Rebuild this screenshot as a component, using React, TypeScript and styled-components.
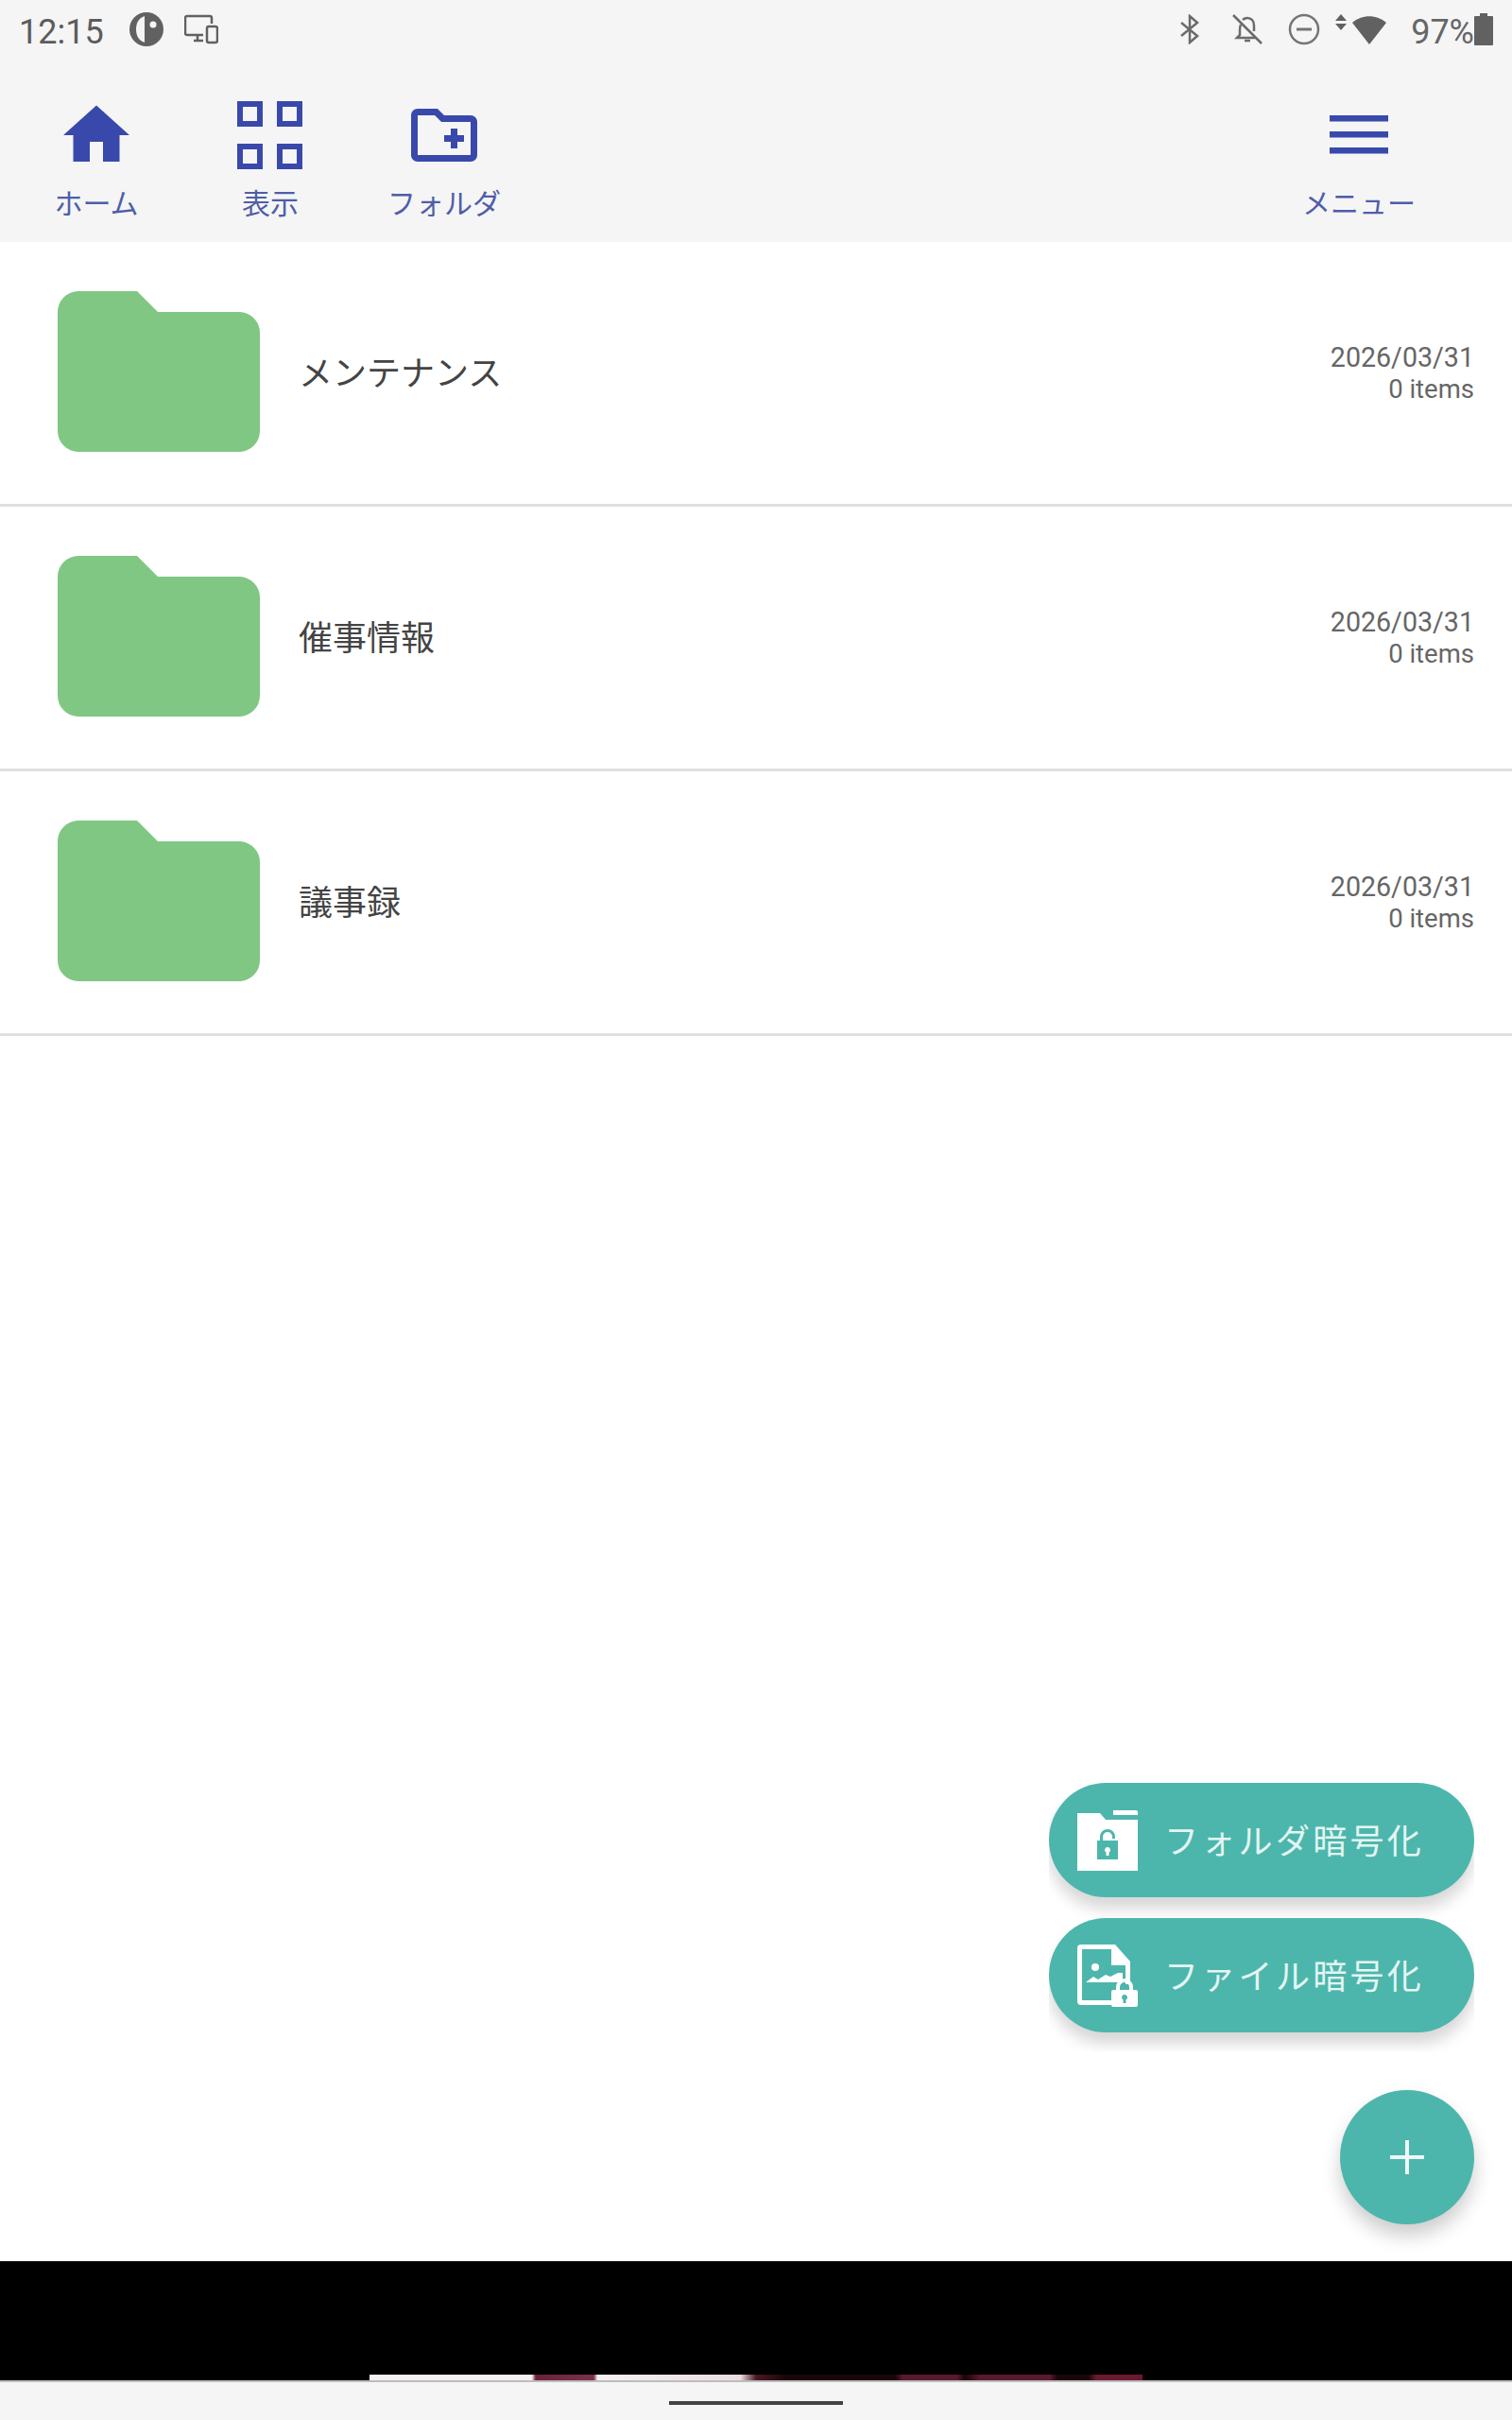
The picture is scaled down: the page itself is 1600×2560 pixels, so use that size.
import React from "react";
import styled, { createGlobalStyle } from "styled-components";

const FONT = `Roboto, "Noto Sans CJK JP", sans-serif`;
const INDIGO = "#3949ab";
const TEAL = "#4db6ac";

const folders = [
  { name: "メンテナンス", date: "2026/03/31", count: "0 items" },
  { name: "催事情報", date: "2026/03/31", count: "0 items" },
  { name: "議事録", date: "2026/03/31", count: "0 items" },
];

export default function App() {
  return (
    <Page>
      <GlobalStyle />
      <StatusBar>
        <StatusGroup>
          <Clock>12:15</Clock>
          <DataSaverIcon />
          <DevicesIcon />
        </StatusGroup>
        <StatusGroup>
          <BluetoothIcon />
          <BellOffIcon />
          <DndIcon />
          <WifiIcon />
          <Battery>97%</Battery>
          <BatteryIcon />
        </StatusGroup>
      </StatusBar>
      <Toolbar>
        <ToolGroup>
          <ToolItem>
            <HomeIcon />
            <ToolLabel>ホーム</ToolLabel>
          </ToolItem>
          <ToolItem>
            <GridIcon />
            <ToolLabel>表示</ToolLabel>
          </ToolItem>
          <ToolItem>
            <NewFolderIcon />
            <ToolLabel>フォルダ</ToolLabel>
          </ToolItem>
        </ToolGroup>
        <ToolItem>
          <MenuIcon />
          <ToolLabel>メニュー</ToolLabel>
        </ToolItem>
      </Toolbar>
      <Content>
        {folders.map((folder) => (
          <Row key={folder.name}>
            <FolderShape />
            <RowName>{folder.name}</RowName>
            <RowMeta>
              <MetaDate>{folder.date}</MetaDate>
              <MetaCount>{folder.count}</MetaCount>
            </RowMeta>
          </Row>
        ))}
        <FabArea>
          <PillStack>
            <Pill>
              <FolderLockIcon />
              <PillText>フォルダ暗号化</PillText>
            </Pill>
            <Pill>
              <FileLockIcon />
              <PillText>ファイル暗号化</PillText>
            </Pill>
          </PillStack>
          <RoundFab>
            <svg width="36" height="36" viewBox="0 0 36 36">
              <path d="M16 0h4v16h16v4H20v16h-4V20H0v-4h16z" fill="#eef8f7" />
            </svg>
          </RoundFab>
        </FabArea>
      </Content>
      <BlackBand>
        <Sliver />
      </BlackBand>
      <NavBar>
        <NavHandle />
      </NavBar>
    </Page>
  );
}

const HomeIcon = () => (
  <ToolSvg width="84" height="84" viewBox="0 0 24 24">
    <path d="M10 20v-6h4v6h5v-8h3L12 3 2 12h3v8z" fill={INDIGO} />
  </ToolSvg>
);

const GridIcon = () => (
  <ToolSvg width="72" height="72" viewBox="0 0 72 72">
    <path
      fillRule="evenodd"
      d="M1 0h27v27H1zM7 6v15h15V6zM43 0h27v27H43zM49 6v15h15V6zM1 45h27v27H1zM7 51v15h15V51zM43 45h27v27H43zM49 51v15h15V51z"
      fill={INDIGO}
    />
  </ToolSvg>
);

const NewFolderIcon = () => (
  <ToolSvg width="84" height="84" viewBox="0 0 24 24">
    <path
      d="M20 6h-8l-2-2H4c-1.11 0-1.99.89-1.99 2L2 18c0 1.11.89 2 2 2h16c1.11 0 2-.89 2-2V8c0-1.11-.89-2-2-2zm0 12H4V6h5.17l2 2H20v10zm-8-4h2v2h2v-2h2v-2h-2v-2h-2v2h-2z"
      fill={INDIGO}
    />
  </ToolSvg>
);

const MenuIcon = () => (
  <ToolSvg width="62" height="84" viewBox="0 0 62 84">
    <path d="M0 21h62v6.500H0zM0 38h62v6.500H0zM0 55h62v6.500H0z" fill={INDIGO} />
  </ToolSvg>
);

const FolderShape = () => (
  <svg width="214" height="170" viewBox="0 0 214 170">
    <path
      d="M22 0H84l22 22h86a22 22 0 0 1 22 22v104a22 22 0 0 1-22 22H22a22 22 0 0 1-22-22V22A22 22 0 0 1 22 0z"
      fill="#81c784"
    />
  </svg>
);

const FolderLockIcon = () => (
  <svg width="64" height="64" viewBox="0 0 64 64">
    <path d="M38 0h24a2 2 0 0 1 2 2v3H38z" fill="#fff" />
    <path d="M0 3h24l6 7h34v54H0z" fill="#fff" />
    <path
      fillRule="evenodd"
      d="M21 32h3v-4a8 8 0 0 1 16 0v2h-3v-2a5 5 0 0 0-10 0v4h16v20H21zM32 39a3 3 0 0 0-1.500 5.600V48h3v-3.400A3 3 0 0 0 32 39z"
      fill={TEAL}
    />
  </svg>
);

const FileLockIcon = () => (
  <svg width="64" height="66" viewBox="0 0 64 66">
    <path
      fillRule="evenodd"
      d="M0 4a4 4 0 0 1 4-4h36l16 18v24h-5V22H36V5H5v54h32v5H4a4 4 0 0 1-4-4z"
      fill="#fff"
    />
    <path d="M9 40l8-6 5 3 8-5 5 2 8-4 5 0v10H9z" fill="#fff" />
    <circle cx="19" cy="24" r="4" fill="#fff" />
    <path
      fillRule="evenodd"
      d="M38 48h3v-3a9 9 0 0 1 18 0v3h3a2 2 0 0 1 2 2v14a2 2 0 0 1-2 2H38a2 2 0 0 1-2-2V50a2 2 0 0 1 2-2zM45 48h10v-3a5 5 0 0 0-10 0zM50 53a3 3 0 0 0-1.500 5.600V62h3v-3.400A3 3 0 0 0 50 53z"
      fill="#fff"
    />
  </svg>
);

const DataSaverIcon = () => (
  <svg width="36" height="36" viewBox="0 0 36 36">
    <circle cx="18" cy="18" r="18" fill="#616161" />
    <path d="M16 4c-6 2-9 7-9 14s3 12 9 14z" fill="#f5f5f5" />
    <circle cx="25" cy="13" r="3.500" fill="#f5f5f5" />
  </svg>
);

const DevicesIcon = () => (
  <StatusSvg $shift={-5} width="36" height="32" viewBox="0 0 36 32" fill="none" stroke="#616161" strokeWidth="2.500">
    <path d="M20 22H3a2 2 0 0 1-2-2V4a2 2 0 0 1 2-2h24a2 2 0 0 1 2 2v6" />
    <path d="M10 28h10M14 23v5" />
    <rect x="24" y="13" width="11" height="17" rx="2" />
  </StatusSvg>
);

const BluetoothIcon = () => (
  <svg width="20" height="32" viewBox="0 0 20 32" fill="none" stroke="#6b6b6b" strokeWidth="2.500">
    <path d="M1 9l17 14-8 7V2l8 7L1 23" />
  </svg>
);

const BellOffIcon = () => (
  <StatusSvg $shift={8} width="32" height="32" viewBox="0 0 32 32" fill="none" stroke="#6b6b6b" strokeWidth="2.500">
    <path d="M9 11c-1 2-1 4-1 6v5l-3 3h19M11 6c1-1 3-2 5-2 4 0 7 3 7 8v6" />
    <path d="M13 28h6M1 1l30 30" />
  </StatusSvg>
);

const DndIcon = () => (
  <svg width="34" height="34" viewBox="0 0 34 34" fill="none" stroke="#757575" strokeWidth="2.500">
    <circle cx="17" cy="17" r="15" />
    <path d="M9 17h16" strokeWidth="3" />
  </svg>
);

const WifiIcon = () => (
  <StatusSvg $shift={-11} width="58" height="32" viewBox="0 0 58 32">
    <path d="M6 0l6 7H0zM0 10h12l-6 7zM36 32L18 9c10-9 26-9 36 0z" fill="#616161" />
  </StatusSvg>
);

const BatteryIcon = () => (
  <svg width="20" height="34" viewBox="0 0 20 34">
    <path d="M6 0h8v3h5a1 1 0 0 1 1 1v29a1 1 0 0 1-1 1H1a1 1 0 0 1-1-1V4a1 1 0 0 1 1-1h5z" fill="#616161" />
  </svg>
);

const GlobalStyle = createGlobalStyle`
  html, body {
    margin: 0;
    padding: 0;
    background: #fff;
  }
`;

const Page = styled.div`
  width: 1600px;
  height: 2560px;
  display: flex;
  flex-direction: column;
  font-family: ${FONT};
  overflow: hidden;
`;

const StatusBar = styled.div`
  height: 62px;
  box-sizing: border-box;
  padding: 0 20px;
  background: #f5f5f5;
  display: flex;
  align-items: center;
  justify-content: space-between;
`;

const StatusGroup = styled.div`
  display: flex;
  align-items: center;
  gap: 27px;
`;

const StatusSvg = styled.svg<{ $shift: number }>`
  margin-left: ${(p) => p.$shift}px;
`;

const Clock = styled.span`
  font-size: 36px;
  color: #5c5c5c;
  margin-top: 5px;
`;

const Battery = styled.span`
  font-size: 36px;
  color: #666;
  margin-top: 5px;
  margin-left: -5px;
  margin-right: -27px;
`;

const Toolbar = styled.div`
  height: 194px;
  box-sizing: border-box;
  padding: 0 70px 0 10px;
  background: #f5f5f5;
  display: flex;
  justify-content: space-between;
`;

const ToolGroup = styled.div`
  display: flex;
`;

const ToolItem = styled.div`
  width: 184px;
  display: flex;
  flex-direction: column;
  align-items: center;
`;

const ToolSvg = styled.svg`
  height: 84px;
  margin-top: 39px;
  flex: none;
`;

const ToolLabel = styled.div`
  margin-top: 11px;
  font-size: 30px;
  line-height: 40px;
  color: #4f5ea8;
`;

const Content = styled.div`
  position: relative;
  flex: 1;
  background: #fff;
`;

const Row = styled.div`
  height: 280px;
  box-sizing: border-box;
  padding: 0 40px 3px 61px;
  border-bottom: 3px solid #e0e0e0;
  display: flex;
  align-items: center;
  gap: 41px;
`;

const RowName = styled.div`
  font-size: 36px;
  color: #444;
  margin-bottom: 3px;
`;

const RowMeta = styled.div`
  margin-left: auto;
  margin-top: 3px;
  text-align: right;
  line-height: 33px;
  color: #666;
`;

const MetaDate = styled.div`
  font-size: 28.6px;
`;

const MetaCount = styled.div`
  font-size: 27.5px;
`;

const FabArea = styled.div`
  position: absolute;
  right: 40px;
  bottom: 39px;
  display: flex;
  flex-direction: column;
  align-items: flex-end;
`;

const PillStack = styled.div`
  display: flex;
  flex-direction: column;
  gap: 22px;
  padding-bottom: 20px;
  overflow: hidden;
`;

const Pill = styled.div`
  width: 450px;
  height: 121px;
  box-sizing: border-box;
  padding-left: 30px;
  border-radius: 61px;
  background: ${TEAL};
  box-shadow: 0 12px 16px rgba(0, 0, 0, 0.16);
  display: flex;
  align-items: center;
  gap: 28px;
`;

const PillText = styled.span`
  font-size: 36px;
  letter-spacing: 3.3px;
  color: #e4f5f3;
  margin-bottom: 3px;
`;

const RoundFab = styled.div`
  margin-top: 41px;
  width: 142px;
  height: 142px;
  border-radius: 50%;
  background: ${TEAL};
  box-shadow: 0 12px 20px rgba(0, 0, 0, 0.2);
  display: flex;
  align-items: center;
  justify-content: center;
`;

const BlackBand = styled.div`
  height: 126px;
  background: #000;
  display: flex;
  flex-direction: column;
  justify-content: flex-end;
  align-items: center;
`;

const Sliver = styled.div`
  width: 818px;
  height: 6px;
  background: linear-gradient(
    to right,
    #f6f0f2 0,
    #f6f0f2 21%,
    #6a2238 21.5%,
    #7a3248 29%,
    #f6f0f2 29.5%,
    #eaddE0 48%,
    #4a1822 50%,
    #1a0508 54%,
    #1a0508 68%,
    #5a1a2e 69%,
    #5a1a2e 76%,
    #1a0508 77%,
    #5a1a2e 79%,
    #5a1a2e 88%,
    #1a0508 89%,
    #1a0508 93%,
    #6a1a30 94%,
    #6a1a30 100%
  );
`;

const NavBar = styled.div`
  height: 42px;
  box-sizing: border-box;
  padding-top: 20px;
  background: #f5f5f5;
  border-top: 2px solid #bdbdbd;
  display: flex;
  justify-content: center;
`;

const NavHandle = styled.div`
  width: 184px;
  height: 4px;
  background: #444;
`;
